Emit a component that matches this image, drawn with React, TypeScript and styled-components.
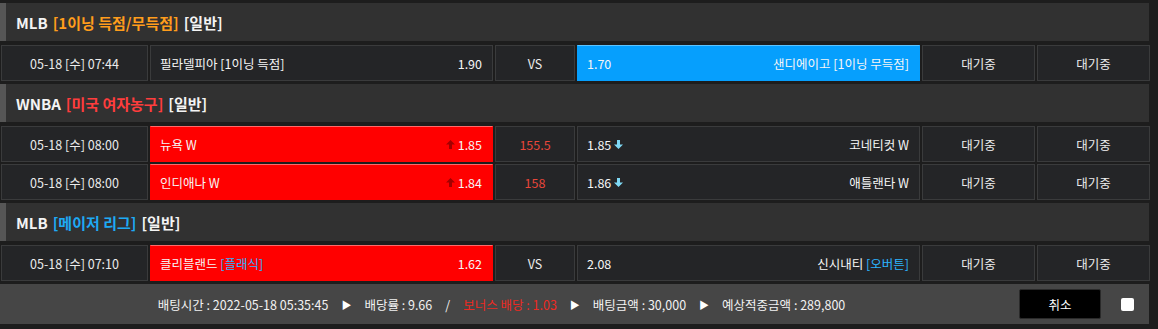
import styled, { createGlobalStyle } from "styled-components";

const Global = createGlobalStyle`
body{
  margin:0;
  background:#1d1d1d;
  font-family:"Noto Sans CJK KR","Noto Sans",sans-serif;
  color:#ececec;
}
`;

const Board = styled.div`
width:1149px;
padding-top:3px;
display:flex;
flex-direction:column;
`;

const Title = styled.div`
height:38px;
margin-top:${({first})=>first?"0":"3px"};
background:#313131;
border-left:6px solid #565656;
padding-left:10px;
display:flex;
align-items:center;
gap:5px;
font-size:15px;
font-weight:700;
color:#f4f4f4;
`;

const Tag = styled.span`
color:${({tone})=>tone};
`;

const Row = styled.div`
display:grid;
grid-template-columns:147px 343px 80px 343px 113px 113px;
column-gap:2px;
height:36px;
margin-top:${({gap})=>gap}px;
padding-left:1px;
font-size:12.5px;
`;

const Cell = styled.div`
background:#242527;
border:1px solid #3a3b3c;
display:flex;
align-items:center;
justify-content:${({align})=>align||"center"};
color:${({tone})=>tone||"#ececec"};
`;

const Pick = styled.div`
display:flex;
align-items:center;
justify-content:space-between;
padding:0 10px 0 9px;
background:${({kind})=>kind==="red"?"#ff0000":kind==="blue"?"#069ffd":"#242527"};
border:1px solid ${({kind})=>kind==="red"?"#ff0000":kind==="blue"?"#069ffd":"#3a3b3c"};
border-top-color:${({kind})=>kind==="red"?"#ff6a6a":kind==="blue"?"#5cc3ff":"#3a3b3c"};
color:#f6f6f6;
`;

const Odd = styled.span`
display:flex;
align-items:center;
gap:3px;
`;

const Sub = styled.span`
color:#2cb4ff;
`;

const Footer = styled.div`
margin-top:3px;
height:40px;
background:#464646;
display:flex;
align-items:center;
font-size:12.5px;
color:#f2f2f2;
`;

const Info = styled.div`
flex:1;
display:flex;
justify-content:center;
align-items:center;
gap:13px;
padding-right:16px;
`;

const Red = styled.span`
color:#ec2a22;
`;

const Tri = styled.span`
font-size:10px;
color:#fff;
`;

const Cancel = styled.button`
width:82px;
height:30px;
background:#000;
border:1px solid #2a2a2a;
border-radius:2px;
color:#fff;
font-family:inherit;
font-size:12.5px;
`;

const Check = styled.span`
width:13px;
height:13px;
margin:0 15px 0 20px;
background:#fff;
border-radius:2px;
`;

const Up = () => (
  <svg width="9" height="9" viewBox="0 0 9 9">
    <path d="M4.5 0 L9 4.5 L6 4.5 L6 9 L3 9 L3 4.5 L0 4.5 Z" fill="#a30000" />
  </svg>
);

const Down = () => (
  <svg width="9" height="9" viewBox="0 0 9 9">
    <path d="M3 0 L6 0 L6 4.5 L9 4.5 L4.5 9 L0 4.5 L3 4.5 Z" fill="#7fd8f4" />
  </svg>
);

const Wait = () => (
  <>
    <Cell>대기중</Cell>
    <Cell>대기중</Cell>
  </>
);

const App = () => {
  return (
    <>
      <Global />
      <Board>
        <Title first>
          MLB <Tag tone="#ff9d1c">[1이닝 득점/무득점]</Tag> [일반]
        </Title>
        <Row gap={4}>
          <Cell>05-18 [수] 07:44</Cell>
          <Pick>
            <span>필라델피아 [1이닝 득점]</span>
            <Odd>1.90</Odd>
          </Pick>
          <Cell>VS</Cell>
          <Pick kind="blue">
            <Odd>1.70</Odd>
            <span>샌디에이고 [1이닝 무득점]</span>
          </Pick>
          <Wait />
        </Row>

        <Title>
          WNBA <Tag tone="#ff3d3d">[미국 여자농구]</Tag> [일반]
        </Title>
        <Row gap={4}>
          <Cell>05-18 [수] 08:00</Cell>
          <Pick kind="red">
            <span>뉴욕 W</span>
            <Odd><Up />1.85</Odd>
          </Pick>
          <Cell tone="#e8463a">155.5</Cell>
          <Pick>
            <Odd>1.85<Down /></Odd>
            <span>코네티컷 W</span>
          </Pick>
          <Wait />
        </Row>
        <Row gap={2}>
          <Cell>05-18 [수] 08:00</Cell>
          <Pick kind="red">
            <span>인디애나 W</span>
            <Odd><Up />1.84</Odd>
          </Pick>
          <Cell tone="#e8463a">158</Cell>
          <Pick>
            <Odd>1.86<Down /></Odd>
            <span>애틀랜타 W</span>
          </Pick>
          <Wait />
        </Row>

        <Title>
          MLB <Tag tone="#1eaaf5">[메이저 리그]</Tag> [일반]
        </Title>
        <Row gap={4}>
          <Cell>05-18 [수] 07:10</Cell>
          <Pick kind="red">
            <span>클리블랜드 <Sub>[플래식]</Sub></span>
            <Odd>1.62</Odd>
          </Pick>
          <Cell>VS</Cell>
          <Pick>
            <Odd>2.08</Odd>
            <span>신시내티 <Sub>[오버튼]</Sub></span>
          </Pick>
          <Wait />
        </Row>

        <Footer>
          <Info>
            <span>배팅시간 : 2022-05-18 05:35:45</span>
            <Tri>▶</Tri>
            <span>배당률 : 9.66</span>
            <span>/</span>
            <Red>보너스 배당 : 1.03</Red>
            <Tri>▶</Tri>
            <span>배팅금액 : 30,000</span>
            <Tri>▶</Tri>
            <span>예상적중금액 : 289,800</span>
          </Info>
          <Cancel>취소</Cancel>
          <Check />
        </Footer>
      </Board>
    </>
  );
};

export default App;
